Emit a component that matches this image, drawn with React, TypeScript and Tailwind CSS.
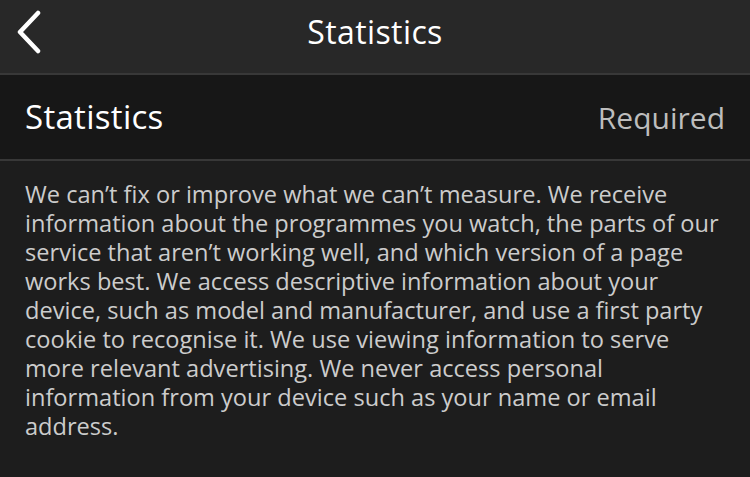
import React from "react";

const BODY =
  "We can\u2019t fix or improve what we can\u2019t measure. We receive information about the programmes you watch, the parts of our service that aren\u2019t working well, and which version of a page works best. We access descriptive information about your device, such as model and manufacturer, and use a first party cookie to recognise it. We use viewing information to serve more relevant advertising. We never access personal information from your device such as your name or email address.";

const BackChevron = () => (
  <svg width="30" height="44" viewBox="0 0 30 44" fill="none" stroke="#ffffff" strokeWidth="4.5" strokeLinecap="round" strokeLinejoin="round">
    <path d="M24 3L6 22l18 19" />
  </svg>
);

export default function App() {
  return (
    <div className="w-[750px] h-[477px] bg-[#1d1d1d] overflow-hidden font-['Open_Sans',sans-serif]">
      <header className="relative h-[75px] bg-[#282828] border-b-2 border-[#383838] flex items-start justify-center pt-[10px]">
        <button className="absolute left-[14px] top-[10px]">
          <BackChevron />
        </button>
        <h1 className="text-[32px] leading-[44px] tracking-[0.4px] text-white">Statistics</h1>
      </header>
      <div className="h-[86px] bg-[#171717] border-b-2 border-[#383838] flex items-center justify-between px-[25px]">
        <span className="text-[33px] tracking-[0.3px] text-white">Statistics</span>
        <span className="text-[30px] text-[#bdbdbd]">Required</span>
      </div>
      <p className="pl-[25px] pr-[20px] pt-[19px] text-[23.6px] leading-[29px] text-[#cccccc]">{BODY}</p>
    </div>
  );
}
